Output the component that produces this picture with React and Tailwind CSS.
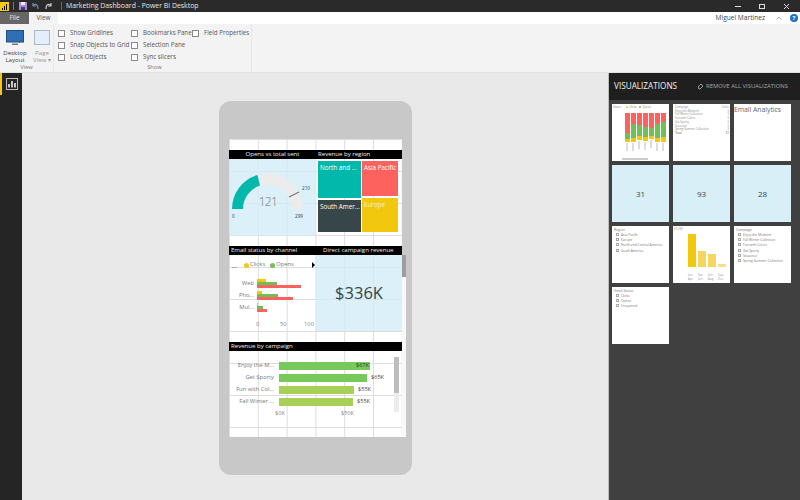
import React from "react";

const font = { fontFamily: '"Open Sans", "Noto Sans", sans-serif' };

function Check({ label }) {
  return (
    <div className="flex items-center gap-[5px] h-[12px]">
      <span className="w-[7px] h-[7px] border border-[#8a8a8a] bg-white shrink-0" />
      <span className="text-[6.2px] leading-none text-[#555] whitespace-nowrap">{label}</span>
    </div>
  );
}

function TitleBar() {
  return (
    <div className="h-[12px] bg-[#2a2a2a] flex items-center text-white shrink-0">
      <div className="w-[9px] h-[9px] bg-[#f2c811] flex items-end justify-center gap-[1px] pb-[1px]">
        <span className="w-[1px] h-[2px] bg-black" />
        <span className="w-[1px] h-[4px] bg-black" />
        <span className="w-[1px] h-[6px] bg-black" />
      </div>
      <span className="w-[1px] h-[8px] bg-[#777] ml-[4px]" />
      <svg width="8" height="8" viewBox="0 0 8 8" className="ml-[5px]">
        <rect width="8" height="8" fill="#a98bd6" />
        <rect x="2" y="0" width="4" height="3" fill="#eee" />
        <rect x="2" y="5" width="4" height="3" fill="#4a3a70" />
      </svg>
      <svg width="9" height="8" viewBox="0 0 9 8" className="ml-[4px]" fill="none" stroke="#6d8fb5" strokeWidth="1.2">
        <path d="M2 1v3h3M2 4c2-3 5-2 5 3" />
      </svg>
      <svg width="9" height="8" viewBox="0 0 9 8" className="ml-[4px]" fill="none" stroke="#c9c9c9" strokeWidth="1.2">
        <path d="M7 1v3H4M7 4C5 1 2 2 2 7" />
      </svg>
      <span className="w-[1px] h-[8px] bg-[#666] ml-[8px]" />
      <span className="ml-[4px] text-[6.9px] leading-none whitespace-nowrap text-[#e6e6e6]">Marketing Dashboard - Power BI Desktop</span>
      <div className="ml-auto flex items-center">
        <span className="w-[6px] h-[1px] bg-[#ddd]" />
        <span className="w-[6px] h-[5px] border border-[#ddd] ml-[18px]" />
        <svg width="7" height="7" viewBox="0 0 7 7" className="ml-[18px] mr-[10px]" stroke="#ddd" strokeWidth="1">
          <path d="M1 1l5 5M6 1l-5 5" />
        </svg>
      </div>
    </div>
  );
}

function TabRow() {
  return (
    <div className="h-[12px] bg-white flex items-stretch shrink-0">
      <div className="w-[29px] bg-[#666] text-[#e8e8e8] text-[6.4px] flex items-center justify-center">File</div>
      <div className="w-[29px] bg-[#f3f3f3] text-[#555] text-[6.4px] flex items-center justify-center">View</div>
      <div className="ml-auto flex items-center">
        <span className="text-[6.6px] text-[#444] whitespace-nowrap">Miguel Martinez</span>
        <svg width="6" height="4" viewBox="0 0 6 4" className="ml-[11px]" fill="none" stroke="#999" strokeWidth="0.8">
          <path d="M0.5 3.5L3 1l2.5 2.5" />
        </svg>
        <span className="ml-[8px] mr-[2px] w-[8px] h-[8px] rounded-full bg-[#1a73c8] text-white text-[6px] font-bold leading-[8px] text-center">?</span>
      </div>
    </div>
  );
}

function Ribbon() {
  return (
    <div className="h-[49px] bg-[#f3f3f3] border-b border-[#e2e2e2] flex shrink-0">
      <div className="w-[54px] border-r border-[#e8e8e8] flex flex-col items-center pt-[6px]">
        <div className="flex gap-[7px] pl-[2px]">
          <div className="flex flex-col items-center w-[22px]">
            <svg width="18" height="16" viewBox="0 0 18 16">
              <rect x="0.5" y="0.5" width="17" height="11.5" fill="#2f6fb5" stroke="#1f4f86" />
              <rect x="6" y="13.5" width="6" height="1.5" fill="#777" />
              <path d="M13 13l3-3" stroke="#555" strokeWidth="1" />
            </svg>
            <span className="text-[6.1px] leading-[7px] text-[#444] text-center mt-[3px]">Desktop Layout</span>
          </div>
          <div className="flex flex-col items-center w-[18px]">
            <svg width="16" height="16" viewBox="0 0 16 16">
              <rect x="0.5" y="0.5" width="15" height="14" fill="#e3eefb" stroke="#aab8c8" />
            </svg>
            <span className="text-[6.1px] leading-[7px] text-[#999] text-center mt-[3px]">Page View ▾</span>
          </div>
        </div>
        <span className="mt-auto mb-[1px] text-[5.8px] leading-[7px] text-[#777]">View</span>
      </div>
      <div className="w-[198px] border-r border-[#e8e8e8] flex flex-col pl-[4px] pt-[3px]">
        <div className="flex">
          <div className="w-[73px] flex flex-col">
            <Check label="Show Gridlines" />
            <Check label="Snap Objects to Grid" />
            <Check label="Lock Objects" />
          </div>
          <div className="w-[61px] flex flex-col">
            <Check label="Bookmarks Pane" />
            <Check label="Selection Pane" />
            <Check label="Sync slicers" />
          </div>
          <Check label="Field Properties" />
        </div>
        <span className="mt-auto mb-[1px] text-center text-[5.8px] leading-[7px] text-[#777]">Show</span>
      </div>
    </div>
  );
}

function Bar({ children, className = "" }) {
  return (
    <div className={"h-[9px] bg-black text-[#f2f2f2] text-[6.05px] leading-[9px] whitespace-nowrap flex relative " + className}>
      {children}
    </div>
  );
}

function Gauge() {
  return (
    <div className="w-[87px] h-[77px] bg-[#d3ecf7]/80 relative">
      <svg width="87" height="77" viewBox="229 159 87 77" className="absolute inset-0">
        <path d="M232 209A35.5 35.5 0 0 1 303 209L292 209A24.5 24.5 0 0 0 243 209Z" fill="#ececec" />
        <path d="M232 209A35.5 35.5 0 0 1 257.5 175L260 185.5A24.5 24.5 0 0 0 243 209Z" fill="#01b8aa" />
        <path d="M289 197L299 192" stroke="#333" strokeWidth="0.8" />
      </svg>
      <span className="absolute left-[29px] top-[34px] w-[20px] text-center text-[12px] tracking-[-0.6px] font-light leading-[18px] text-[#777]">121</span>
      <span className="absolute left-[3px] top-[54px] text-[4.6px] leading-[6px] text-[#333]">0</span>
      <span className="absolute left-[73px] top-[26px] text-[4.6px] leading-[6px] text-[#333]">210</span>
      <span className="absolute left-[66px] top-[54px] text-[4.6px] leading-[6px] text-[#333]">299</span>
    </div>
  );
}

function Treemap() {
  return (
    <div className="ml-[2px] mt-[2px] w-[80px] h-[71px] flex gap-[1px] text-white text-[6.3px] leading-[10px]">
      <div className="w-[43px] flex flex-col gap-[2px]">
        <div className="h-[37px] bg-[#01b8aa] px-[2px] pt-[2px] whitespace-nowrap">North and ...</div>
        <div className="flex-1 bg-[#374649] px-[2px] pt-[2px] whitespace-nowrap">South Amer...</div>
      </div>
      <div className="w-[36px] flex flex-col gap-[2px]">
        <div className="h-[35px] bg-[#fd625e] px-[2px] pt-[2px] whitespace-nowrap">Asia Pacific</div>
        <div className="flex-1 bg-[#f2c80f] px-[2px] pt-[2px] whitespace-nowrap text-[#f6f0c8]">Europe</div>
      </div>
    </div>
  );
}

function ChannelRow({ label, y, g, r }) {
  return (
    <div className="flex items-center h-[11px] mb-[1px]">
      <span className="w-[27px] pr-[2px] text-right text-[5.8px] text-[#777] leading-none whitespace-nowrap">{label}</span>
      <div className="flex flex-col ml-[1px]">
        <span className="h-[3px] bg-[#f2c80f] block" style={{ width: y }} />
        <span className="h-[3px] bg-[#6fbf57] block" style={{ width: g }} />
        <span className="h-[3px] bg-[#fd625e] block" style={{ width: r }} />
      </div>
    </div>
  );
}

function ChannelChart() {
  return (
    <div className="w-[87px] h-[76px] pt-[6px] relative">
      <div className="flex items-center h-[8px] text-[5.8px] text-[#777] leading-none pl-[3px]">
        <span className="w-[5px] h-[1px] bg-[#aaa] mt-[5px]" />
        <span className="ml-[7px] w-[5px] h-[5px] rounded-full bg-[#f2c80f]" />
        <span className="ml-[1px]">Clicks</span>
        <span className="ml-[5px] w-[5px] h-[5px] rounded-full bg-[#6fbf57]" />
        <span className="ml-[1px]">Opens</span>
        <span className="ml-[18px] w-0 h-0 border-y-[3px] border-y-transparent border-l-[3px] border-l-black" />
      </div>
      <div className="mt-[9px]">
        <ChannelRow label="Web" y={9} g={20} r={44} />
        <ChannelRow label="Pho..." y={5} g={21} r={36} />
        <ChannelRow label="Mul..." y={1} g={6} r={10} />
      </div>
      <div className="flex mt-[9px] ml-[27px] text-[5.8px] leading-none text-[#888]">
        <span className="w-[24px]">0</span>
        <span className="w-[24px]">50</span>
        <span>100</span>
      </div>
    </div>
  );
}

function RevenueRow({ label, width, color, value, inside }) {
  return (
    <div className="flex items-center h-[8px] mb-[4px]">
      <span className="w-[45px] text-right text-[5.8px] leading-none text-[#777] whitespace-nowrap">{label}</span>
      <div className="ml-[5px] h-[8px] flex items-center justify-end pr-[1px]" style={{ width, backgroundColor: color }}>
        {inside && <span className="text-[5.6px] leading-none text-[#333]">{value}</span>}
      </div>
      {!inside && <span className="ml-[4px] text-[5.6px] leading-none text-[#444]">{value}</span>}
    </div>
  );
}

function RevenueChart() {
  return (
    <div className="h-[86px] pt-[11px] relative">
      <RevenueRow label="Enjoy the M..." width={91} color="#78c95b" value="$67K" inside />
      <RevenueRow label="Get Sporty" width={88} color="#78c95b" value="$65K" />
      <RevenueRow label="Fun with Col..." width={75} color="#a8cf58" value="$55K" />
      <RevenueRow label="Fall Winter ..." width={74} color="#a8cf58" value="$55K" />
      <div className="flex ml-[46px] mt-[5px] text-[5.6px] leading-none text-[#888]">
        <span className="w-[66px]">$0K</span>
        <span>$50K</span>
      </div>
      <div className="absolute left-[165px] top-[6px] w-[5px] h-[55px] bg-[#ececec]">
        <div className="h-[36px] bg-[#bdbdbd]" />
      </div>
    </div>
  );
}

function Page() {
  return (
    <div className="w-[173px] h-[298px] bg-white bg-[linear-gradient(to_right,#dcdcdc_1px,transparent_1px),linear-gradient(to_bottom,#dcdcdc_1px,transparent_1px)] bg-[size:28.8px_32px] pt-[11px] relative">
      <Bar>
        <span className="w-[87px] text-center">Opens vs total sent</span>
        <span className="pl-[2px]">Revenue by region</span>
      </Bar>
      <div className="flex h-[77px]">
        <Gauge />
        <Treemap />
      </div>
      <Bar className="mt-[10px]">
        <span className="w-[87px] pl-[2px]">Email status by channel</span>
        <span className="pl-[7px]">Direct campaign revenue</span>
      </Bar>
      <div className="flex h-[76px]">
        <ChannelChart />
        <div className="w-[86px] bg-[#d3ecf7]/80 flex items-center justify-center text-[16.5px] text-[#374649]">$336K</div>
      </div>
      <Bar className="mt-[11px]">
        <span className="pl-[2px]">Revenue by campaign</span>
      </Bar>
      <RevenueChart />
      <div className="absolute left-[173px] top-[116px] w-[4px] h-[22px] bg-[#9d9d9d]" />
      <div className="absolute left-[173px] top-[138px] w-[4px] h-[160px] bg-[#f8f8f8]" />
    </div>
  );
}

function Thumb({ children, className = "" }) {
  return <div className={"w-[57px] h-[57px] relative overflow-hidden " + className}>{children}</div>;
}

function Slicer({ title, items }) {
  return (
    <Thumb className="bg-white px-[2px] pt-[1px]">
      <div className="text-[3.4px] leading-[5px] text-[#777]">{title}</div>
      {items.map((t) => (
        <div key={t} className="flex items-center gap-[2px] h-[5.2px] ml-[2px]">
          <span className="w-[3px] h-[3px] border-[0.5px] border-[#aaa] shrink-0" />
          <span className="text-[3.3px] leading-none text-[#777] whitespace-nowrap">{t}</span>
        </div>
      ))}
    </Thumb>
  );
}

function Kpi({ v }) {
  return (
    <Thumb className="bg-[#d8eff8] flex items-center justify-center text-[8px] text-[#374649]">{v}</Thumb>
  );
}

const stacks = [
  [20, 6, 3],
  [11, 14, 4],
  [12, 11, 4],
  [14, 10, 4],
  [15, 8, 3],
  [11, 14, 4],
  [9, 15, 5],
];

function StackThumb() {
  return (
    <Thumb className="bg-white">
      <div className="flex items-center pl-[1px] pt-[2px] text-[2.8px] leading-none text-[#888]">
        <span>Status</span>
        <span className="ml-[5px] w-[2px] h-[2px] rounded-full bg-[#f2c80f]" />
        <span className="ml-[1px]">Clicks</span>
        <span className="ml-[3px] w-[2px] h-[2px] rounded-full bg-[#6fbf57]" />
        <span className="ml-[1px]">Opens</span>
      </div>
      <div className="flex gap-[1.5px] items-start ml-[13px] mt-[4px]">
        {stacks.map((s, i) => (
          <div key={i} className="w-[4.5px] flex flex-col">
            <span className="block bg-[#fd625e]" style={{ height: s[0] }} />
            <span className="block bg-[#6fbf57]" style={{ height: s[1] }} />
            <span className="block bg-[#f2c80f]" style={{ height: s[2] }} />
            <span className="block w-[1.5px] h-[8px] mt-[1px] ml-[1px] bg-[#ddd]" />
          </div>
        ))}
      </div>
      <div className="absolute left-[10px] bottom-[1px] w-[26px] h-[2px] bg-[#ccc]" />
    </Thumb>
  );
}

function TableThumb() {
  const rows = ["Enjoy the Moment", "Fall Winter Collection", "Fun with Colors", "Get Sporty", "Seasonal", "Spring Summer Collection"];
  return (
    <Thumb className="bg-white pt-[2px]">
      <div className="w-[54px] ml-[2px] text-[2.8px] leading-[3.7px] text-[#888]">
        <div className="flex justify-between"><span>Campaign</span><span>Clicks</span></div>
        {rows.map((r) => (
          <div key={r} className="flex justify-between"><span>{r}</span><span>5</span></div>
        ))}
        <div className="flex justify-between text-[#444]"><span>Total</span><span>31</span></div>
      </div>
    </Thumb>
  );
}

function BarThumb() {
  return (
    <Thumb className="bg-white pt-[1px] pl-[1px]">
      <div className="text-[3px] leading-[4px] text-[#999]">$0.5M</div>
      <div className="absolute left-[15px] bottom-[16px] flex gap-[2.5px] items-end">
        <span className="w-[7.5px] h-[33px] bg-[#f2c80f]" />
        <span className="w-[7.5px] h-[16px] bg-[#f6d65c]" />
        <span className="w-[7.5px] h-[13px] bg-[#f6d65c]" />
        <span className="w-[7.5px] h-[3px] bg-[#f8e08a]" />
      </div>
      <div className="absolute left-[15px] bottom-[2px] flex gap-[2.5px] text-[3px] leading-[4px] text-[#999]">
        <span className="w-[7.5px]">Jan-Apr</span>
        <span className="w-[7.5px]">Spr-Jun</span>
        <span className="w-[7.5px]">Jun-Aug</span>
        <span className="w-[7.5px]">Sep-Dec</span>
      </div>
    </Thumb>
  );
}

function VizPane() {
  return (
    <div className="w-[192px] bg-[#404040] border-l border-[#bdbdbd] flex flex-col">
      <div className="h-[27px] bg-[#1f1f1f] flex items-center pl-[5px] shrink-0">
        <span className="text-[8.2px] text-[#f2f2f2] whitespace-nowrap">VISUALIZATIONS</span>
        <svg width="7" height="7" viewBox="0 0 7 7" className="ml-[20px]" fill="none" stroke="#bbb" strokeWidth="0.8">
          <path d="M1 4l3-3 2 2-3 3H2z" />
        </svg>
        <span className="ml-[2px] text-[5.9px] text-[#aaa] whitespace-nowrap">REMOVE ALL VISUALIZATIONS</span>
      </div>
      <div className="grid grid-cols-[57px_57px_57px] gap-[4px] pl-[3px] pt-[4px]">
        <StackThumb />
        <TableThumb />
        <Thumb className="bg-white text-[6.8px] leading-[11px] text-[#666] whitespace-nowrap">Email Analytics</Thumb>
        <Kpi v="31" />
        <Kpi v="93" />
        <Kpi v="28" />
        <Slicer title="Region" items={["Asia Pacific", "Europe", "North and Central America", "South America"]} />
        <BarThumb />
        <Slicer title="Campaign" items={["Enjoy the Moment", "Fall Winter Collection", "Fun with Colors", "Get Sporty", "Seasonal", "Spring Summer Collection"]} />
        <Slicer title="Email Status" items={["Clicks", "Opens", "Unopened"]} />
      </div>
    </div>
  );
}

export default function App() {
  return (
    <div className="w-[800px] h-[500px] flex flex-col overflow-hidden bg-[#e9e9e9]" style={font}>
      <TitleBar />
      <TabRow />
      <Ribbon />
      <div className="flex-1 flex min-h-0">
        <div className="w-[22px] bg-[#252525] shrink-0">
          <div className="h-[22px] border-l-2 border-[#f2c811] flex items-center justify-center">
            <svg width="12" height="12" viewBox="0 0 12 12" fill="none">
              <rect x="0.5" y="0.5" width="11" height="11" stroke="#bbb" />
              <path d="M3 9.5V6M6 9.5V3M9 9.5V5" stroke="#fff" strokeWidth="1.5" />
            </svg>
          </div>
        </div>
        <div className="flex-1 pl-[197px] pt-[28px] min-w-0">
          <div className="w-[193px] h-[374px] bg-[#c8c8c8] rounded-[12px] pl-[10px] pt-[38px]">
            <Page />
          </div>
        </div>
        <VizPane />
      </div>
    </div>
  );
}
